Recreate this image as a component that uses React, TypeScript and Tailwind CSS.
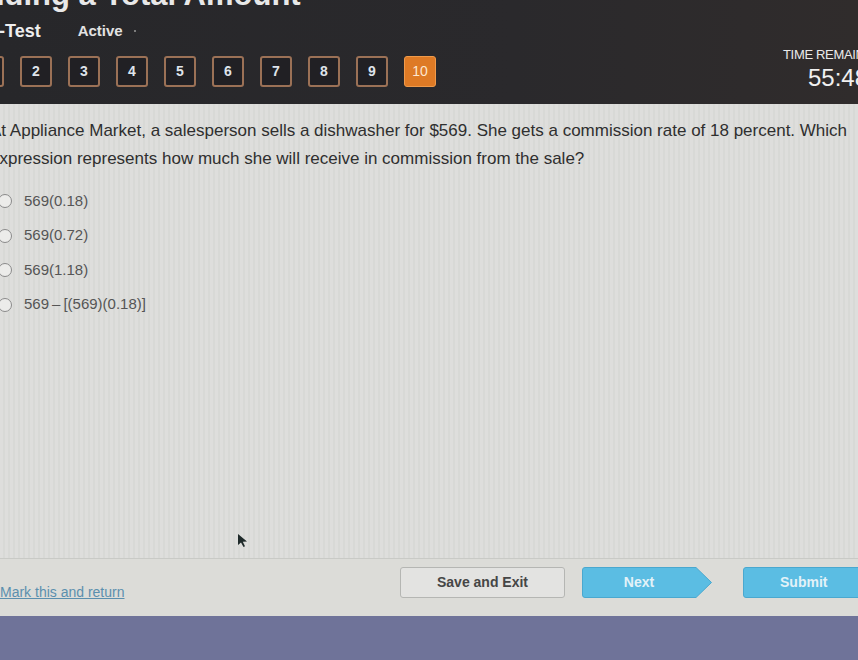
import React from "react";

const nums = [1, 2, 3, 4, 5, 6, 7, 8, 9, 10];
const options = ["569(0.18)", "569(0.72)", "569(1.18)", "569\u2009\u2013\u2009[(569)(0.18)]"];

export default function App() {
  return (
    <div className="relative w-[858px] h-[660px] overflow-hidden bg-[#6f7399] font-['Liberation_Sans',Arial,sans-serif]">
      {/* Header */}
      <div className="h-[104px] bg-[linear-gradient(90deg,#27272a_0%,#2a292c_60%,#302c2c_100%)] flex flex-col">
        <div className="h-[12px] overflow-hidden">
          <div className="-mt-[22px] -ml-[42px] text-[31px] font-bold text-[#e8e8e8] leading-[34px] whitespace-nowrap">
            Finding a Total Amount
          </div>
        </div>
        <div className="flex items-center h-[38px]">
          <span className="text-[18px] font-bold text-[#eeeeee] -ml-[1px]">-Test</span>
          <span className="ml-[37px] text-[15px] font-bold text-[#e2e2e2]">Active</span>
          <span className="ml-[11px] w-[2px] h-[2px] rounded-full bg-[#999]"></span>
        </div>
        <div className="flex items-start">
          <div className="flex gap-4 -ml-[28px] mt-[6px]">
            {nums.map((n) =>
              n === 10 ? (
                <div
                  key={n}
                  className="w-[32px] h-[31px] rounded-[3px] bg-[#de7a25] border border-[#f09a4a] flex items-center justify-center text-[14px] text-[#fde7cf]"
                >
                  {n}
                </div>
              ) : (
                <div
                  key={n}
                  className="w-[32px] h-[31px] rounded-[3px] border-2 border-[#9b7156] bg-[#212024] flex items-center justify-center text-[14px] font-bold text-[#dfe3ea]"
                >
                  {n}
                </div>
              )
            )}
          </div>
          <div className="ml-auto -mt-[5px] flex flex-col items-start w-[75px]">
            <span className="text-[13px] text-[#eaeaea] whitespace-nowrap tracking-tight">TIME REMAINING</span>
            <span className="ml-[25px] text-[24px] leading-[26px] text-[#f0f0f0] whitespace-nowrap">55:48</span>
          </div>
        </div>
      </div>

      {/* Content */}
      <div className="h-[512px] bg-[repeating-linear-gradient(90deg,#dededc_0px,#dededc_3px,#d8d9d6_3px,#d8d9d6_5px)] flex flex-col">
        <div className="-ml-[10px] mt-[13px] text-[17px] leading-[28px] text-[#2f2f2f] whitespace-nowrap">
          At Appliance Market, a salesperson sells a dishwasher for $569. She gets a commission rate of 18 percent. Which
          <br />
          expression represents how much she will receive in commission from the sale?
        </div>
        <div className="flex flex-col mt-[17px] gap-[12.5px]">
          {options.map((o) => (
            <div key={o} className="flex items-center h-[22px]">
              <span className="-ml-[2px] w-[14px] h-[14px] rounded-full border border-[#8a8a8a] bg-[#ececea]"></span>
              <span className="ml-[12px] text-[15px] text-[#555555]">{o}</span>
            </div>
          ))}
        </div>
        <div className="flex-1"></div>
        <div className="border-t border-[#c9cac6] h-[58px] flex items-start bg-[#dcdcd8]">
          <span className="mt-[23px] text-[14px] text-[#5b8fae] underline">Mark this and return</span>
          <div className="ml-auto -mr-[15px] flex items-center gap-[17px] mt-[8px]">
            <div className="w-[165px] h-[31px] rounded-[3px] border border-[#b5b6b3] bg-[#e3e3e1] flex items-center justify-center text-[14px] font-semibold text-[#464646]">
              Save and Exit
            </div>
            <div className="relative w-[130px] h-[31px] flex items-center">
              <svg className="absolute inset-0" width="130" height="31" viewBox="0 0 130 31">
                <path d="M3 0.5 H114 L129.5 15.5 L114 30.5 H3 Q0.5 30.5 0.5 28 V3 Q0.5 0.5 3 0.5 Z" fill="#5bbde3" stroke="#4aa8cf" />
              </svg>
              <span className="relative w-[114px] text-center text-[14px] font-bold text-[#e3f2f8]">Next</span>
            </div>
            <div className="ml-[14px] w-[130px] h-[31px] rounded-l-[3px] bg-[#5bbde3] border border-[#4aa8cf] flex items-center">
              <span className="ml-[36px] text-[14px] font-bold text-[#e3f2f8]">Submit</span>
            </div>
          </div>
        </div>
      </div>

      {/* Cursor */}
      <svg className="absolute left-[237px] top-[533px]" width="12" height="16" viewBox="0 0 12 16">
        <path d="M1 1 L1 12 L4 9.5 L6.5 14 L8 13.2 L5.8 8.8 L10 8.5 Z" fill="#1f2a2a" />
      </svg>
    </div>
  );
}
